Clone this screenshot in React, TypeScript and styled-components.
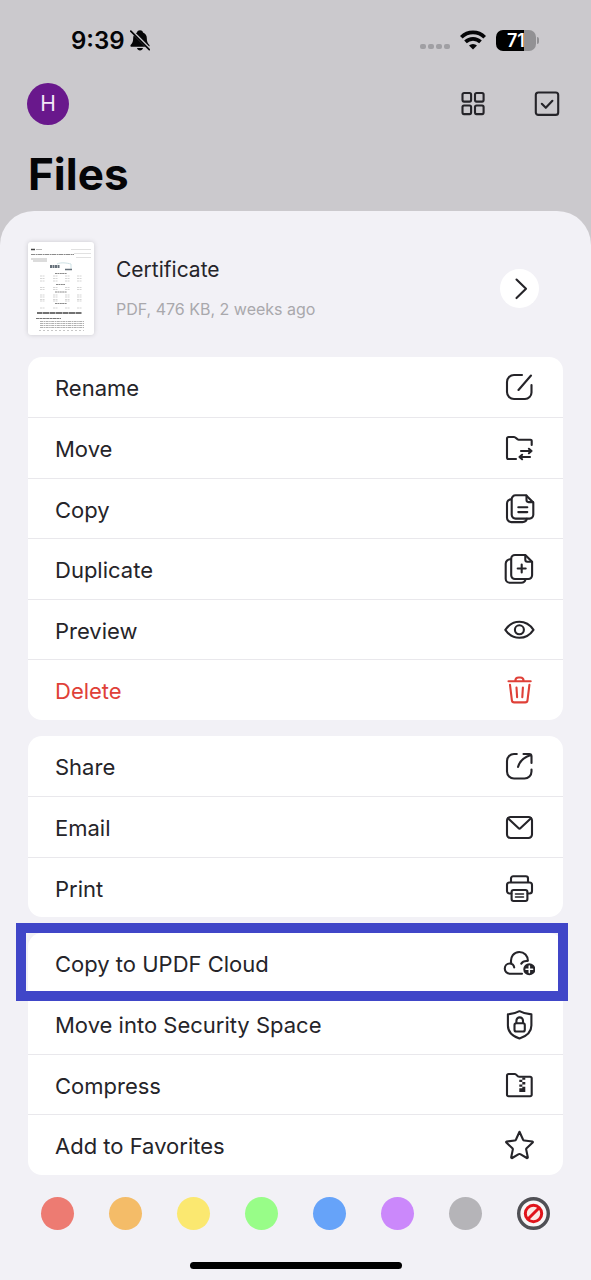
import React from "react";
import styled, { createGlobalStyle } from "styled-components";

const GlobalStyle = createGlobalStyle`
  *, *::before, *::after { box-sizing: border-box; }
  body { margin: 0; background: #cbc9cd; }
  button { font: inherit; color: inherit; border: 0; padding: 0; background: none; cursor: pointer; }
`;

const Screen = styled.div`
  display: flex;
  flex-direction: column;
  min-height: 100vh;
  background: #cbc9cd;
  color: #252429;
  font-family: Inter, "Liberation Sans", sans-serif;
`;

const StatusBar = styled.div`
  display: flex;
  align-items: center;
  justify-content: space-between;
  height: 40px;
  margin-top: 20px;
  padding: 0 52px 0 71px;
  color: #050507;
`;

const StatusGroup = styled.div<{ $gap: number }>`
  display: flex;
  align-items: center;
  gap: ${(p) => p.$gap}px;
`;

const Time = styled.span`
  padding-top: 2px;
  font-size: 24px;
  line-height: 28px;
  font-weight: 600;
`;

const Signal = styled.span`
  display: flex;
  gap: 2px;
  padding-top: 12px;
`;

const SignalDot = styled.i`
  width: 6px;
  height: 5px;
  border-radius: 2px;
  background: #a09fa3;
`;

const BatteryWrap = styled.span`
  display: flex;
  align-items: center;
  gap: 1px;
`;

const BatteryBody = styled.span`
  display: flex;
  align-items: center;
  justify-content: center;
  width: 40px;
  height: 21px;
  border-radius: 7px;
  background: linear-gradient(90deg, #000 70%, #929194 70%);
  color: #fff;
  font-size: 18px;
  line-height: 21px;
  font-weight: 600;
`;

const BatteryNub = styled.i`
  width: 2px;
  height: 7px;
  border-radius: 0 2px 2px 0;
  background: #929194;
`;

const Toolbar = styled.header`
  display: flex;
  align-items: center;
  justify-content: space-between;
  margin-top: 23px;
  padding: 0 31px 0 27px;
`;

const Avatar = styled.button`
  width: 42px;
  height: 42px;
  border-radius: 50%;
  background: #69188c;
  color: #f3e6f8;
  font-size: 21px;
  line-height: 42px;
`;

const ToolbarActions = styled.div`
  display: flex;
  gap: 48px;
`;

const IconButton = styled.button`
  display: flex;
  width: 26px;
  height: 26px;
`;

const PageTitle = styled.h1`
  margin: 21px 28px 9px;
  color: #050507;
  font-size: 44px;
  line-height: 56px;
  font-weight: 700;
`;

const Sheet = styled.main`
  display: flex;
  flex: 1;
  flex-direction: column;
  padding: 31px 28px 11px;
  border-radius: 34px 34px 0 0;
  background: #f2f1f6;
`;

const FileInfo = styled.section`
  display: flex;
  align-items: center;
  padding-right: 24px;
  margin-bottom: 22px;
`;

const Thumbnail = styled.span`
  display: flex;
  flex: none;
  width: 66px;
  height: 93px;
  border-radius: 3px;
  background: #fff;
  box-shadow: 0 0 5px rgba(0, 0, 0, 0.16);
`;

const FileText = styled.div`
  flex: 1;
  min-width: 0;
  padding: 0 0 2px 22px;
`;

const FileName = styled.h2`
  margin: 0;
  font-size: 21px;
  line-height: 28px;
  font-weight: 400;
`;

const FileMeta = styled.p`
  margin: 14px 0 0;
  color: #a9a8ac;
  font-size: 16px;
  line-height: 22px;
`;

const OpenButton = styled.button`
  display: flex;
  align-items: center;
  justify-content: center;
  width: 39px;
  height: 39px;
  border-radius: 50%;
  background: #fff;
`;

const Group = styled.ul`
  margin: 0 0 16px;
  padding: 0;
  list-style: none;
  border-radius: 14px;
  background: #fff;
`;

const Item = styled.li`
  position: relative;
  display: flex;
  height: 60px;

  &:nth-child(even) { height: 61px; }
  & + & { border-top: 1px solid #e9e8ec; }
`;

const ItemButton = styled.button<{ $danger?: boolean }>`
  display: flex;
  flex: 1;
  align-items: center;
  justify-content: space-between;
  padding: 0 28px 0 27px;
  color: ${(p) => (p.$danger ? "#df4038" : "#252429")};
  font-size: 22px;
  line-height: 28px;
  text-align: left;
`;

const ItemLabel = styled.span`
  padding-top: 2px;
`;

const Highlight = styled.span`
  position: absolute;
  inset: -10px -5px -8px -12px;
  border: 10px solid #4046c8;
  pointer-events: none;
  z-index: 1;
`;

const Swatches = styled.fieldset`
  display: flex;
  justify-content: space-between;
  margin: 6px 0 0;
  padding: 0 13px;
  border: 0;
`;

const Swatch = styled.input<{ $color: string }>`
  appearance: none;
  width: 33px;
  height: 33px;
  margin: 0;
  border-radius: 50%;
  background: ${(p) => p.$color};
`;

const NoColor = styled.label`
  position: relative;
  display: flex;
  width: 33px;
  height: 33px;

  input { position: absolute; inset: 0; margin: 0; opacity: 0; }
`;

const HomeIndicator = styled.div`
  width: 212px;
  height: 7px;
  margin: auto auto 0;
  border-radius: 4px;
  background: #000;
`;

const Glyph = styled.svg`
  flex: none;
  fill: none;
  stroke: currentColor;
  stroke-width: 2.1;
  stroke-linecap: round;
  stroke-linejoin: round;
`;

const icons: Record<string, React.ReactNode> = {
  rename: <path d="M19 4h-8a7 7 0 0 0-7 7v10a7 7 0 0 0 7 7h11a6.5 6.5 0 0 0 6.5-6.5V14M28 4.500 15.500 19" />,
  move: (
    <>
      <path d="M13 27H5.500A1.500 1.500 0 0 1 4 25.500V6.500A1.500 1.500 0 0 1 5.500 5H11c2 0 2.600 2.700 4.600 2.700H27.500a1.200 1.200 0 0 1 1.200 1.200V13" />
      <path d="M18 19h10.500l-2.600-2.200M28.500 19l-2.600 2.200M27 25H16.500l2.600-2.200M16.500 25l2.600 2.200" />
    </>
  ),
  copy: (
    <>
      <path d="M12.500 2.300H23l7.300 7.300v12.200a3.800 3.800 0 0 1-3.800 3.800h-14a3.800 3.800 0 0 1-3.800-3.800V6.100a3.800 3.800 0 0 1 3.800-3.800Z" />
      <path d="M23.500 2.600v4.500a2 2 0 0 0 2 2h4.500M8 6.400A4 4 0 0 0 4 10.400v14.400A4.300 4.300 0 0 0 8.300 29.100h11.200c2.500 0 4-1.200 4.300-3.400M15.300 14.300h9M15.300 19.100h9" />
    </>
  ),
  duplicate: (
    <>
      <path d="M12 2h10.300l6.800 6.800v13.400a3.800 3.800 0 0 1-3.800 3.800H12a3.800 3.800 0 0 1-3.800-3.800V5.800A3.800 3.800 0 0 1 12 2Z" />
      <path d="M22.300 2.500v4.300a2 2 0 0 0 2 2h4.500M7.500 6.200a4.500 4.500 0 0 0-4.800 4.500v15A4 4 0 0 0 6.700 29.700h11.500c2.500 0 4-1.200 4.300-3.500M18.700 11.500v8M14.700 15.500h8" />
    </>
  ),
  preview: (
    <>
      <path d="M2.300 15.800C6 10.400 11 7.800 16.400 7.800s10.400 2.600 14.100 8c-3.700 5.400-8.700 8-14.100 8S6 21.200 2.300 15.800Z" />
      <circle cx="16.400" cy="15.800" r="4.500" />
    </>
  ),
  trash: (
    <path d="M5.500 7.200h22.200M12.300 7c0-2.400 1.300-3.500 3.300-3.500h1.700c2 0 3.300 1.100 3.300 3.500M7 10.800l1.900 15.500a2.300 2.300 0 0 0 2.300 2.100h11a2.300 2.300 0 0 0 2.300-2.100L26.400 10.800M13.500 13.500l.6 9.700M19.900 13.500l-.6 9.700" />
  ),
  share: (
    <path d="M13.800 4H11a7 7 0 0 0-7 7v10.500a7 7 0 0 0 7 7h10.500a7 7 0 0 0 7-7V19.500M20.500 4h5.700a2.300 2.300 0 0 1 2.300 2.300V13M15 17c1.500-5.500 5-9.500 12.800-12" />
  ),
  email: (
    <>
      <rect x="4" y="6" width="25" height="21" rx="3.500" />
      <path d="m5 7.300 10.400 9.800a1.600 1.600 0 0 0 2.200 0L28 7.300" />
    </>
  ),
  print: (
    <>
      <path d="M8 10.500V6.500a2.200 2.200 0 0 1 2.200-2.200h12.600A2.200 2.200 0 0 1 25 6.500v4M8.300 21.500H6.500A2.500 2.500 0 0 1 4 19v-6A2.500 2.500 0 0 1 6.500 10.500h20a2.500 2.500 0 0 1 2.500 2.500v6a2.500 2.500 0 0 1-2.500 2.500h-1.800" />
      <rect x="8.600" y="18" width="15.800" height="11" rx="2" />
      <path d="M12.500 22h8M12.500 25h8" strokeWidth="1.600" />
    </>
  ),
  cloud: (
    <>
      <path d="M19 26.700H7a5 5 0 0 1-5.200-5.200c0-3 2.200-5 4.800-5 2.300 0 4.200 1.500 4.600 3.900M8.200 16.300C7 9.500 11 5 16.300 5c5 0 8.600 3.700 8.600 8.800M18.300 16.600c1.200-2 3.400-2.900 6.200-2.600" />
      <circle cx="26.300" cy="22.300" r="5" fill="currentColor" />
      <path d="M26.300 19v6.600M23 22.300h6.600" stroke="#fff" strokeWidth="1.600" />
    </>
  ),
  shield: (
    <>
      <path d="M16.500 3.200c3.600 2 7.300 3 11.900 3.200v11c0 6-4.400 10.500-11.900 13.100C9 27.900 4.900 23.400 4.900 17.400v-11c4.400-.2 8-1.200 11.600-3.200Z" />
      <rect x="11.500" y="15.200" width="10.300" height="8.300" rx="1.800" />
      <path d="M13.400 15v-2.300a3.300 3.300 0 0 1 6.600 0V15" />
    </>
  ),
  compress: (
    <>
      <path d="M5.500 5H12c1.500 0 2 2.800 4.200 2.800h11a1.500 1.500 0 0 1 1.500 1.500v16.500a1.500 1.500 0 0 1-1.500 1.500H5.500A1.500 1.500 0 0 1 4 25.800V6.500A1.500 1.500 0 0 1 5.500 5Z" />
      <path d="M19.300 8.500h3v2.300h-3zM16.300 10.800h3v2.300h-3zM19.300 13.100h3v2.300h-3zM16.300 15.400h3v2.300h-3zM19.300 17.700h3v2.600h-3zM16.300 19.300h6v3.700h-6z" fill="currentColor" stroke="none" />
    </>
  ),
  star: (
    <path d="m16.500 2.800 3.600 7.900a1.500 1.500 0 0 0 1.200.8l8.100 1a.6.6 0 0 1 .3 1l-6.100 5.700a1.500 1.500 0 0 0-.4 1.400l1.600 7.700a.7.7 0 0 1-1 .7l-6.500-3.800a1.500 1.500 0 0 0-1.600 0L9.200 29a.7.7 0 0 1-1-.7l1.600-7.700a1.500 1.500 0 0 0-.4-1.400l-6.100-5.700a.6.6 0 0 1 .3-1l8.100-1a1.500 1.500 0 0 0 1.200-.8Z" />
  ),
};

function Icon({ name }: { name: string }) {
  return (
    <Glyph width="32" height="32" viewBox="0 0 32 32" aria-hidden="true">
      {icons[name]}
    </Glyph>
  );
}

type Action = { label: string; icon: string; danger?: boolean; highlighted?: boolean };

const groups: Action[][] = [
  [
    { label: "Rename", icon: "rename" },
    { label: "Move", icon: "move" },
    { label: "Copy", icon: "copy" },
    { label: "Duplicate", icon: "duplicate" },
    { label: "Preview", icon: "preview" },
    { label: "Delete", icon: "trash", danger: true },
  ],
  [
    { label: "Share", icon: "share" },
    { label: "Email", icon: "email" },
    { label: "Print", icon: "print" },
  ],
  [
    { label: "Copy to UPDF Cloud", icon: "cloud", highlighted: true },
    { label: "Move into Security Space", icon: "shield" },
    { label: "Compress", icon: "compress" },
    { label: "Add to Favorites", icon: "star" },
  ],
];

const swatches = [
  ["Red", "#ed7b72"],
  ["Orange", "#f4bc68"],
  ["Yellow", "#fbe870"],
  ["Green", "#98fd88"],
  ["Blue", "#66a3f9"],
  ["Purple", "#cb88fb"],
  ["Gray", "#b5b4b8"],
];

function MutedBell() {
  return (
    <svg width="20" height="21" viewBox="0 0 20 21" aria-label="Silent" role="img">
      <path
        fill="currentColor"
        d="M10 .3c1.600 0 2.700.9 3 2.100 2.500 1 3.800 3.100 3.800 5.600 0 3.400.7 5.100 2.400 6.700.8.800.4 2.100-.9 2.100H1.700c-1.300 0-1.700-1.300-.9-2.100C2.500 13.100 3.200 11.400 3.200 8c0-2.500 1.300-4.600 3.800-5.600C7.300 1.200 8.400.3 10 .3ZM7 18h6c-.3 1.600-1.500 2.500-3 2.500S7.300 19.600 7 18Z"
      />
      <path d="M1.300.7 19.800 19.200" stroke="#cbc9cd" strokeWidth="3" />
      <path d="M.8 1.200 19.300 19.700" stroke="currentColor" strokeWidth="1.700" strokeLinecap="round" />
    </svg>
  );
}

function Wifi() {
  return (
    <svg width="26" height="20" viewBox="0 0 26 20" aria-label="Wi-Fi" role="img">
      <g fill="none" stroke="currentColor" strokeWidth="3.700">
        <path d="M1.300 7.200a16.600 16.600 0 0 1 23.400 0" />
        <path d="M5.500 11.900a10.700 10.700 0 0 1 15 0" />
      </g>
      <path d="M13 19.500 9 15.600a5.800 5.800 0 0 1 8 0Z" fill="currentColor" />
    </svg>
  );
}

function CertificatePreview() {
  const columns = [12, 25, 37, 49];
  return (
    <svg width="66" height="93" viewBox="0 0 66 93" aria-hidden="true">
      <g stroke="#8b8b8b" strokeWidth="1">
        <path d="M3 7.500h4" stroke="#444" strokeWidth="1.500" />
        <path d="M8 7.500h6M3 17h16M5 19h14" opacity=".6" />
        <path d="M3 12.500h43" strokeDasharray="4 .6 2 .4" />
        <path d="M43 7.500h20M46 11.500h17M48 15.500h15" opacity=".25" />
        <path d="M27 31.500h12M28 42.500h9M27 50h12M27 61.500h12" strokeDasharray="2 .4" />
      </g>
      <path d="M29 22c4-2 10-1 14 0v6" fill="none" stroke="#cfe2e5" />
      <path d="M22 24.500h10" stroke="#66707a" strokeWidth="3" strokeDasharray="2 .5" />
      <path d="M37 27.500h7" stroke="#66707a" strokeWidth="1.500" />
      <g stroke="#bbb" opacity=".6">
        {[34, 36.5, 39, 45.5, 47.5, 53, 55, 57.5, 59, 66].map((y) =>
          columns.map((x) => <path key={`${x}-${y}`} d={`M${x} ${y}h5`} strokeDasharray="2 .5" />),
        )}
      </g>
      <path d="M9 71h45" stroke="#444" strokeWidth="1.500" strokeDasharray="5 .5 7 .5" />
      <path d="M8 76.500h25" stroke="#777" strokeDasharray="3 .4" />
      <g stroke="#b0b0b0">
        {[79.5, 81.5, 83.5, 85.5].map((y) => (
          <path key={y} d={`M12 ${y}h44`} strokeDasharray="3 .6 1.500 .5" />
        ))}
        <path d="M11 88.500h45" strokeDasharray="2 2" opacity=".7" />
      </g>
    </svg>
  );
}

export default function App() {
  return (
    <Screen>
      <GlobalStyle />
      <StatusBar>
        <StatusGroup $gap={5}>
          <Time>9:39</Time>
          <MutedBell />
        </StatusGroup>
        <StatusGroup $gap={10}>
          <Signal>
            {[0, 1, 2, 3].map((n) => (
              <SignalDot key={n} />
            ))}
          </Signal>
          <Wifi />
          <BatteryWrap>
            <BatteryBody>71</BatteryBody>
            <BatteryNub />
          </BatteryWrap>
        </StatusGroup>
      </StatusBar>

      <Toolbar>
        <Avatar aria-label="Account">H</Avatar>
        <ToolbarActions>
          <IconButton aria-label="Grid view">
            <Glyph width="26" height="26" viewBox="0 0 26 26">
              <rect x="2.500" y="2" width="8.600" height="8.600" rx="1.500" />
              <rect x="15" y="2" width="8.600" height="8.600" rx="1.500" />
              <rect x="2.500" y="14.500" width="8.600" height="8.600" rx="1.500" />
              <rect x="15" y="14.500" width="8.600" height="8.600" rx="1.500" />
            </Glyph>
          </IconButton>
          <IconButton aria-label="Select">
            <Glyph width="26" height="26" viewBox="0 0 26 26">
              <rect x="1.800" y="1.500" width="22.400" height="22.400" rx="2.500" />
              <path d="m7.800 12.800 4 4 6.600-7" />
            </Glyph>
          </IconButton>
        </ToolbarActions>
      </Toolbar>
      <PageTitle>Files</PageTitle>

      <Sheet>
        <FileInfo>
          <Thumbnail>
            <CertificatePreview />
          </Thumbnail>
          <FileText>
            <FileName>Certificate</FileName>
            <FileMeta>PDF, 476 KB, 2 weeks ago</FileMeta>
          </FileText>
          <OpenButton aria-label="Open details">
            <Glyph width="24" height="24" viewBox="0 0 24 24">
              <path d="m8.500 2.500 9.500 9.300-9.500 9.300" />
            </Glyph>
          </OpenButton>
        </FileInfo>

        {groups.map((actions) => (
          <Group key={actions[0].label}>
            {actions.map((action) => (
              <Item key={action.label}>
                <ItemButton $danger={action.danger}>
                  <ItemLabel>{action.label}</ItemLabel>
                  <Icon name={action.icon} />
                </ItemButton>
                {action.highlighted && <Highlight />}
              </Item>
            ))}
          </Group>
        ))}

        <Swatches aria-label="Color tag">
          {swatches.map(([name, color]) => (
            <Swatch key={name} type="radio" name="tag" aria-label={name} $color={color} />
          ))}
          <NoColor>
            <input type="radio" name="tag" aria-label="No color" defaultChecked />
            <svg width="33" height="33" viewBox="0 0 33 33" aria-hidden="true">
              <circle cx="16.500" cy="16.500" r="14.800" fill="#f8f6f7" stroke="#505055" strokeWidth="3.400" />
              <circle cx="16.500" cy="16.500" r="8.200" fill="#fbe9e4" stroke="#e0141b" strokeWidth="3" />
              <path d="m11 22 11-11" stroke="#e0141b" strokeWidth="3" />
            </svg>
          </NoColor>
        </Swatches>
        <HomeIndicator />
      </Sheet>
    </Screen>
  );
}
